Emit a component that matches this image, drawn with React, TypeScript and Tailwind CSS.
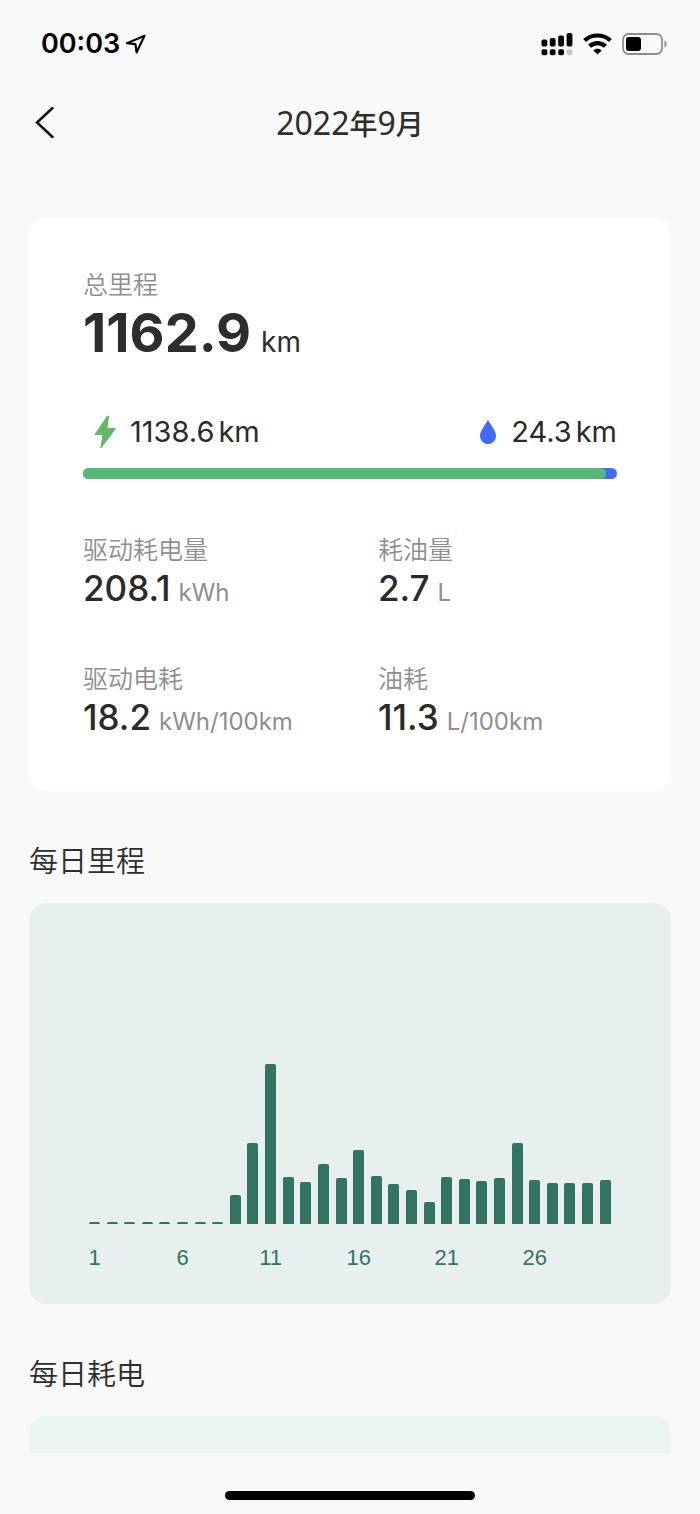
interface Metric {
  label: string
  value: string
  unit: string
}

const metrics: Metric[] = [
  { label: "驱动耗电量", value: "208.1", unit: "kWh" },
  { label: "耗油量", value: "2.7", unit: "L" },
  { label: "驱动电耗", value: "18.2", unit: "kWh/100km" },
  { label: "油耗", value: "11.3", unit: "L/100km" },
]

// Bar height in px for every day of the month
const dailyMileage = [
  2, 2, 2, 2, 2, 2, 2, 2, 29, 81, 160, 47, 42, 60, 46, 74, 48, 40, 34, 22, 47, 45, 43, 46, 81, 44, 41, 41, 41, 44,
]

function StatusBar() {
  return (
    <div className="flex h-[88px] items-center justify-between pl-[41px] pr-[33px]">
      <div className="flex items-center gap-1">
        <span className="text-[27px] font-semibold leading-8 text-black">00:03</span>
        <svg width="22" height="22" viewBox="0 0 22 22" fill="none" stroke="#000" strokeWidth="2.2" strokeLinejoin="round">
          <path d="M20.5 2.8 L3 10.2 L11.4 11.2 L12.6 19.4 Z" />
        </svg>
      </div>
      <div className="flex items-center gap-[10px]">
        <svg width="32" height="24" viewBox="0 0 32 24">
          <rect x="0.5" y="7.5" width="5.8" height="7" rx="1.8" />
          <rect x="8.8" y="6" width="5.8" height="8.5" rx="1.8" />
          <rect x="17.2" y="3.5" width="5.8" height="11" rx="1.8" />
          <rect x="25.6" y="1" width="5.8" height="13.5" rx="1.8" />
          <rect x="0.5" y="17.2" width="5.8" height="6" rx="1.8" />
          <rect x="8.8" y="17.2" width="5.8" height="6" rx="1.8" />
          <rect x="17.2" y="17.2" width="5.8" height="6" rx="1.8" />
          <rect x="25.6" y="17.2" width="5.8" height="6" rx="1.8" fill="#c8c8c8" />
        </svg>
        <svg width="29" height="22" viewBox="0 0 29 22" fill="none" stroke="#000" strokeWidth="4.2">
          <path d="M1.6 7.6 C8.5 0.8 20.5 0.8 27.4 7.6" />
          <path d="M6.6 13.2 C11 9 18 9 22.4 13.2" />
          <path d="M14.5 21.5 L10.3 17.4 C12.6 15.3 16.4 15.3 18.7 17.4 Z" fill="#000" stroke="none" />
        </svg>
        <svg width="45" height="22" viewBox="0 0 45 22">
          <rect x="1" y="1" width="39" height="20" rx="5.5" fill="none" stroke="#8c8c8c" strokeWidth="1.8" />
          <rect x="4" y="4" width="15" height="14" rx="3" />
          <path d="M42.5 7.5 C45.3 8.5 45.3 13.5 42.5 14.5 Z" fill="#8c8c8c" />
        </svg>
      </div>
    </div>
  )
}

function Header() {
  return (
    <header className="grid h-[70px] grid-cols-[1fr_auto_1fr] items-center px-[33px]">
      <button type="button" aria-label="返回" className="flex h-11 w-6 items-center justify-center">
        <svg width="20" height="32" viewBox="0 0 20 32" fill="none" stroke="#111" strokeWidth="2.5" strokeLinecap="round">
          <path d="M17.5 1 L2 15.5 L17.5 30" />
        </svg>
      </button>
      <h1 className="font-['Noto_Sans','Noto_Sans_CJK_SC',sans-serif] text-[28px] font-medium leading-10 text-[#2d2d2d]">
        <span className="text-[32px] font-normal">2022</span>年<span className="text-[32px] font-normal">9</span>月
      </h1>
    </header>
  )
}

function MetricItem({ label, value, unit }: Metric) {
  return (
    <div>
      <dt className="text-[25px] font-[350] leading-9 text-[#8e8e8e]">{label}</dt>
      <dd className="flex items-baseline gap-2 leading-10">
        <span className="text-[35px] font-medium text-[#2a2a2a]">{value}</span>
        <span className="text-2xl text-[#8e8e8e]">{unit}</span>
      </dd>
    </div>
  )
}

function SummaryCard() {
  return (
    <section className="rounded-[18px] bg-white px-[54px] pb-[53px] pt-[49px]">
      <p className="text-[25px] font-[350] leading-9 text-[#8e8e8e]">总里程</p>
      <p className="flex items-baseline gap-[10px] leading-[60px] text-[#2d2d2d]">
        <span className="text-[54px] font-bold">1162.9</span>
        <span className="text-[28px]">km</span>
      </p>

      {/* Electric / fuel split */}
      <div className="mt-10 flex items-center justify-between text-[29px] leading-10 text-[#2a2a2a]">
        <div className="flex items-center gap-3 pl-[11px]">
          <svg width="24" height="34" viewBox="0 0 24 34" fill="#62b866">
            <path d="M13.5 1 L1 19.5 H9 L7 33 L21.5 13.5 H12.8 L14.6 1.3 Z" stroke="#62b866" strokeLinejoin="round" />
          </svg>
          <span className="flex gap-1">
            <span>1138.6</span>
            <span>km</span>
          </span>
        </div>
        <div className="flex items-center gap-[14px]">
          <svg width="18" height="26" viewBox="0 0 18 26" fill="#426cf3">
            <path d="M9 0.5 C7 5.5 1 11 1 17 A8 8.3 0 0 0 17 17 C17 11 11 5.5 9 0.5 Z" />
          </svg>
          <span className="flex gap-1">
            <span>24.3</span>
            <span>km</span>
          </span>
        </div>
      </div>
      <div className="mt-4 h-[11px] overflow-hidden rounded-full bg-[#426cf3]">
        <div className="h-full w-[98%] rounded-full bg-[#58b879]" />
      </div>

      <dl className="mt-[53px] grid grid-cols-[295px_1fr] gap-y-[52px]">
        {metrics.map((m) => (
          <MetricItem key={m.label} {...m} />
        ))}
      </dl>
    </section>
  )
}

function MileageChart() {
  return (
    <div className="flex h-[401px] items-end justify-between rounded-[18px] bg-[#e8f0ef] px-[60px] pb-8">
      {dailyMileage.map((height, i) => (
        <div key={i} className="flex w-[11px] flex-col items-center">
          <div className="w-full rounded-t-[2px] bg-[#337364]" style={{ height }} />
          <span className="mt-5 h-7 whitespace-nowrap font-['Liberation_Sans',sans-serif] text-[22px] leading-7 text-[#337364]">
            {i % 5 === 0 && i < 26 ? i + 1 : ""}
          </span>
        </div>
      ))}
    </div>
  )
}

export default function App() {
  return (
    <div className="flex min-h-screen flex-col bg-[#f8f8f8] font-['Inter','Noto_Sans_CJK_SC',sans-serif]">
      <StatusBar />
      <Header />
      <main className="px-[29px] pt-[60px]">
        <SummaryCard />
        <h2 className="mb-[21px] mt-[51px] text-[29px] font-[350] leading-10 text-[#2d2d2d]">每日里程</h2>
        <MileageChart />
        <h2 className="mb-[21px] mt-[51px] text-[29px] font-[350] leading-10 text-[#2d2d2d]">每日耗电</h2>
        <div className="h-[37px] rounded-t-[18px] bg-[#e9f5ef]" />
      </main>
      <div className="mx-auto mb-[14px] mt-auto h-[9px] w-[250px] rounded-full bg-black" />
    </div>
  )
}
